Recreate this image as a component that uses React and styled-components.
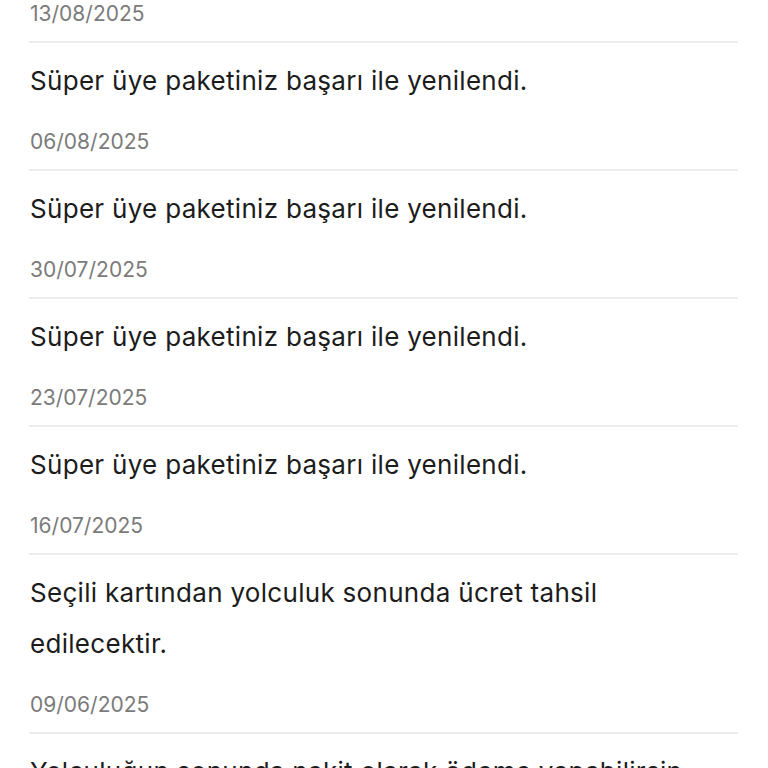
import React from 'react';
import styled, { createGlobalStyle } from 'styled-components';

const GlobalStyle = createGlobalStyle`
  html, body {
    margin: 0;
    padding: 0;
    background: #ffffff;
    font-family: 'Inter', 'Noto Sans', sans-serif;
    -webkit-font-smoothing: antialiased;
  }
`;

const Page = styled.div`
  padding: 0 30px 0 29px;
  overflow: hidden;
  height: 100vh;
`;

// the list is scrolled a little: the first row is mostly above the top edge
const List = styled.ul`
  list-style: none;
  margin: -85px 0 0 0;
  padding: 0;
`;

const Item = styled.li`
  padding: 12px 0 12px 1px;
  border-bottom: 2px solid #ececec;
`;

const Message = styled.p`
  margin: 0;
  font-size: 26px;
  letter-spacing: 0.3px;
  line-height: 51px;
  color: #1c1c1c;
  font-weight: 400;
`;

const DateText = styled.div`
  margin-top: 21px;
  font-size: 21px;
  line-height: 30px;
  color: #7b7b7b;
`;

const notifications = [
  { text: 'Süper üye paketiniz başarı ile yenilendi.', date: '13/08/2025' },
  { text: 'Süper üye paketiniz başarı ile yenilendi.', date: '06/08/2025' },
  { text: 'Süper üye paketiniz başarı ile yenilendi.', date: '30/07/2025' },
  { text: 'Süper üye paketiniz başarı ile yenilendi.', date: '23/07/2025' },
  { text: 'Süper üye paketiniz başarı ile yenilendi.', date: '16/07/2025' },
  { text: 'Seçili kartından yolculuk sonunda ücret tahsil edilecektir.', date: '09/06/2025' },
  { text: 'Yolculuğun sonunda nakit olarak ödeme yapabilirsin.', date: '02/06/2025' },
];

const App = () => (
  <>
    <GlobalStyle />
    <Page>
      <List>
        {notifications.map((n, i) => (
          <Item key={i}>
            <Message>{n.text}</Message>
            <DateText>{n.date}</DateText>
          </Item>
        ))}
      </List>
    </Page>
  </>
);

export default App;
